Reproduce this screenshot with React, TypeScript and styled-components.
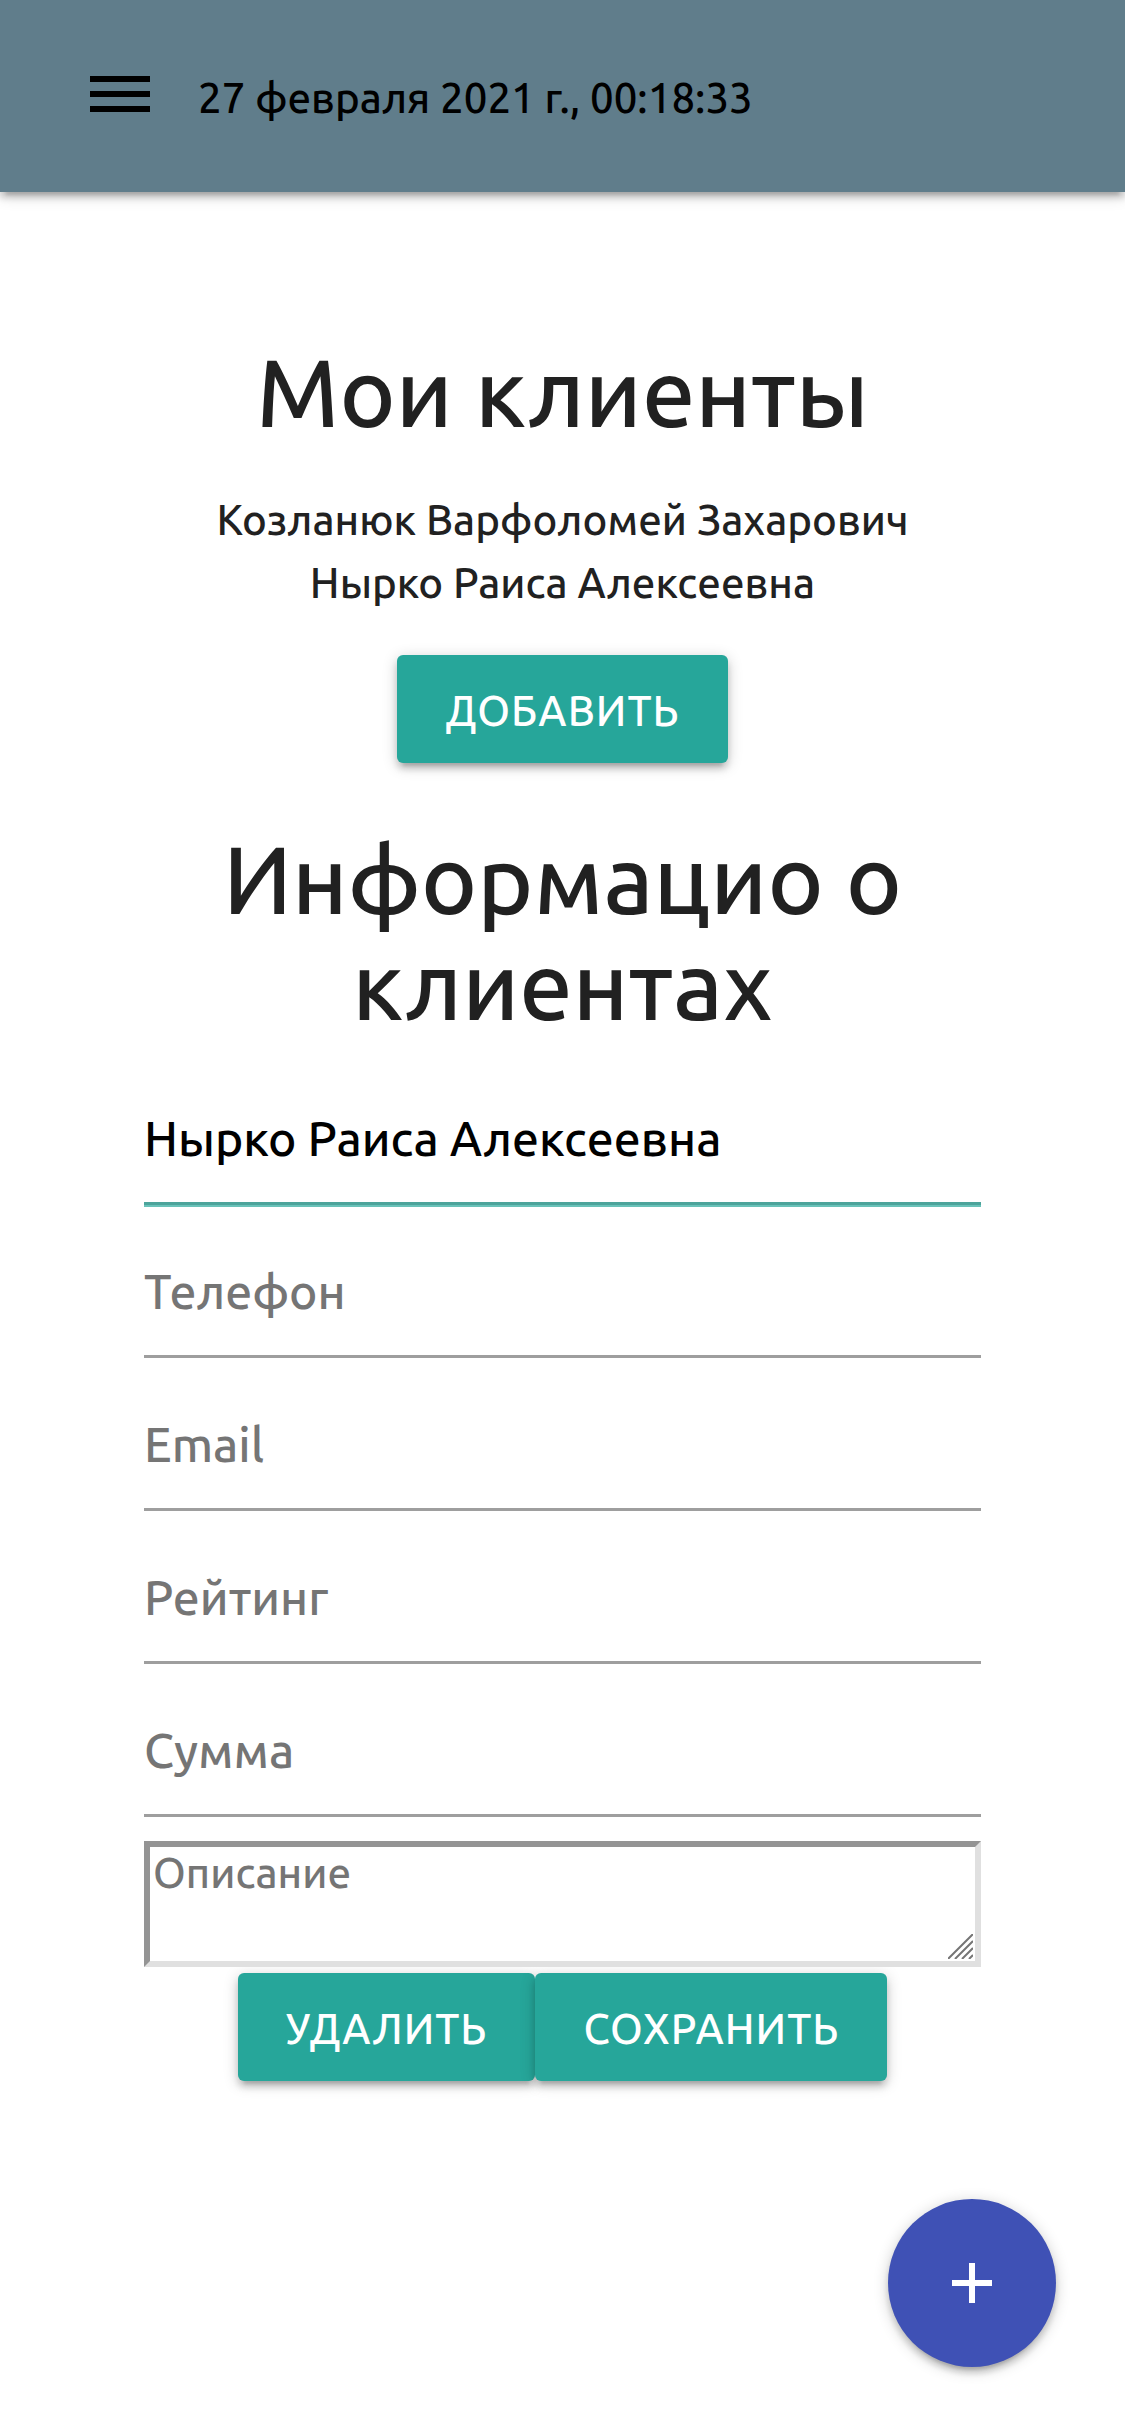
import React, { useState } from "react";
import styled, { createGlobalStyle, css } from "styled-components";

const GlobalStyle = createGlobalStyle`
  *, *::before, *::after { box-sizing: border-box; }
  body {
    margin: 0;
    background: #fff;
    color: #212121;
    font-family: Ubuntu, "Noto Sans", "Open Sans", sans-serif;
    font-size: 42px;
    font-weight: 455;
    line-height: 63px;
  }
`;

const raised = css`
  box-shadow:
    0 6px 6px 0 rgba(0, 0, 0, 0.14),
    0 9px 3px -6px rgba(0, 0, 0, 0.12),
    0 3px 15px 0 rgba(0, 0, 0, 0.2);
`;

const Header = styled.header`
  display: flex;
  align-items: center;
  gap: 48px;
  height: 192px;
  padding: 0 90px;
  background: #607d8b;
  color: #000;
  ${raised}
`;

const MenuButton = styled.button`
  display: flex;
  padding: 0 0 4px;
  border: 0;
  background: none;
  color: inherit;
  cursor: pointer;
`;

const Clock = styled.time`
  padding-top: 2px;
`;

const Main = styled.main`
  display: flex;
  flex-direction: column;
  align-items: center;
  padding: 147px 144px 96px;
`;

const Title = styled.h4`
  margin: 0;
  font-size: 95px;
  font-weight: inherit;
  line-height: 106px;
  text-align: center;
`;

const ClientList = styled.ul`
  margin: 43px 0 41px;
  padding: 0;
  list-style: none;
  text-align: center;
`;

const Button = styled.button`
  height: 108px;
  padding: 2px 48px 0;
  border: 0;
  border-radius: 6px;
  background: #26a69a;
  color: #fff;
  font: inherit;
  letter-spacing: 1px;
  text-transform: uppercase;
  cursor: pointer;
  ${raised}
`;

const Section = styled.section`
  display: flex;
  flex-direction: column;
  align-items: center;
  width: 100%;
  margin-top: 63px;
`;

const Form = styled.form`
  display: flex;
  flex-direction: column;
  gap: 24px;
  width: 100%;
  margin-top: 38px;
`;

const Field = styled.input<{ $active?: boolean }>`
  width: 100%;
  height: 129px;
  padding: 0 0 2px;
  border: 0;
  border-bottom: 3px solid ${(p) => (p.$active ? "#4ca49b" : "#9e9e9e")};
  border-radius: 0;
  outline: 0;
  background: transparent;
  box-shadow: ${(p) => (p.$active ? "0 2px 0 0 #69c2b9" : "none")};
  color: #000;
  font: inherit;
  font-size: 48px;
  &::placeholder { color: #757575; opacity: 1; }
`;

const NotesBox = styled.div`
  position: relative;
  height: 126px;
`;

const Notes = styled.textarea`
  display: block;
  width: 100%;
  height: 100%;
  padding: 0 3px;
  border: 6px solid;
  border-color: #949494 #e0e0e0 #e0e0e0 #949494;
  border-radius: 0;
  outline: 0;
  background: transparent;
  color: #000;
  font: inherit;
  line-height: 52px;
  overflow: hidden;
  resize: none;
  &::placeholder { color: #757575; opacity: 1; }
`;

const Grip = styled.svg`
  position: absolute;
  right: 8px;
  bottom: 8px;
  pointer-events: none;
`;

const Actions = styled.div`
  display: flex;
  justify-content: center;
  margin-top: -18px;
`;

const Fab = styled.button`
  position: fixed;
  right: 69px;
  bottom: 69px;
  display: flex;
  align-items: center;
  justify-content: center;
  width: 168px;
  height: 168px;
  padding: 0;
  border: 0;
  border-radius: 50%;
  background: #3f51b5;
  color: #fff;
  cursor: pointer;
  ${raised}
`;

const clients = ["Козланюк Варфоломей Захарович", "Нырко Раиса Алексеевна"];

const fields = [
  { name: "phone", label: "Телефон" },
  { name: "email", label: "Email" },
  { name: "rating", label: "Рейтинг" },
  { name: "sum", label: "Сумма" },
];

export default function App() {
  const [name, setName] = useState(clients[1]);

  return (
    <>
      <GlobalStyle />
      <Header>
        <MenuButton type="button" aria-label="Меню">
          <svg width="60" height="36" viewBox="0 0 60 36" fill="currentColor">
            <path d="M0 0h60v6H0zM0 15h60v6H0zM0 30h60v6H0z" />
          </svg>
        </MenuButton>
        <Clock dateTime="2021-02-27T00:18:33">27 февраля 2021 г., 00:18:33</Clock>
      </Header>
      <Main>
        <Title>Мои клиенты</Title>
        <ClientList>
          {clients.map((client) => (
            <li key={client}>{client}</li>
          ))}
        </ClientList>
        <Button type="button">Добавить</Button>
        <Section>
          <Title>Информацио о клиентах</Title>
          <Form onSubmit={(e) => e.preventDefault()}>
            <Field
              $active
              aria-label="Имя"
              value={name}
              onChange={(e) => setName(e.target.value)}
            />
            {fields.map((f) => (
              <Field key={f.name} name={f.name} aria-label={f.label} placeholder={f.label} />
            ))}
            <NotesBox>
              <Notes aria-label="Описание" placeholder="Описание" />
              <Grip width="25" height="25" viewBox="0 0 25 25" stroke="#757575" strokeWidth="2">
                <path d="M0 25L25 0M7 25L25 7M14 25L25 14M21 25L25 21" />
              </Grip>
            </NotesBox>
            <Actions>
              <Button type="button">Удалить</Button>
              <Button type="submit">Сохранить</Button>
            </Actions>
          </Form>
        </Section>
      </Main>
      <Fab type="button" aria-label="Добавить клиента">
        <svg width="40" height="40" viewBox="0 0 40 40" fill="currentColor">
          <path d="M17 0h6v17h17v6H23v17h-6V23H0v-6h17z" />
        </svg>
      </Fab>
    </>
  );
}
